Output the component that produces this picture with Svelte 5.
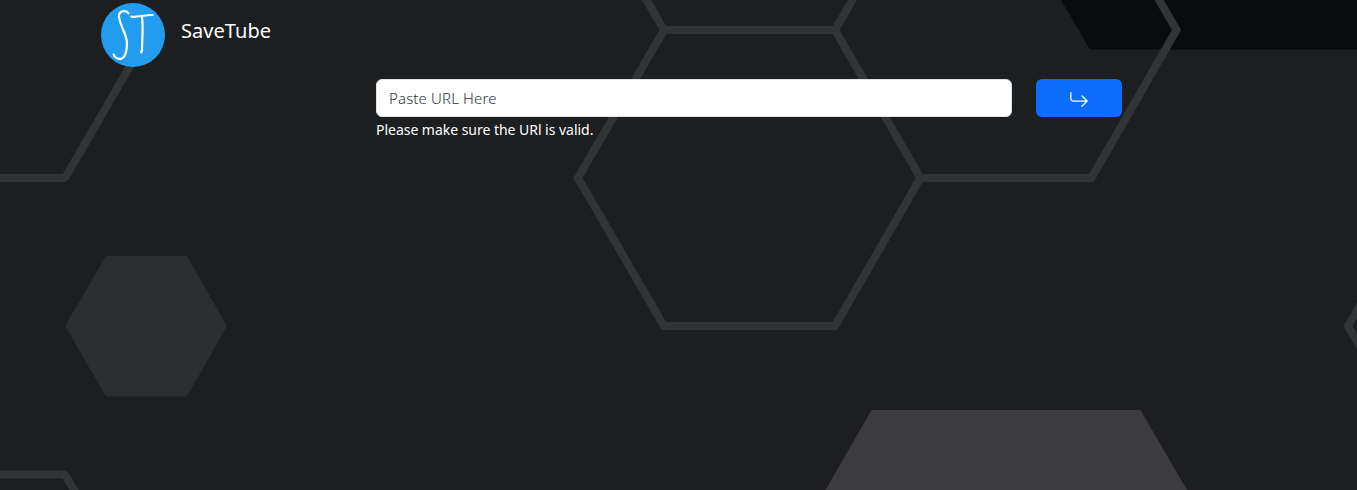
<script>
  let url = $state('');
</script>

<div class="page">
  <svg class="backdrop" width="1357" height="490" viewBox="0 0 1357 490" aria-hidden="true">
    <path fill="#0a0b0d" d="M1061 0H1357V49.500H1090Z" />
    <path fill="#2c2d2f" d="M106 256H187L227 326L187 396.500H106L65 326Z" />
    <path fill="#3c3c3e" d="M871.500 410H1140.500L1187 490H825.500Z" />
    <g fill="none" stroke="#323335" stroke-width="8" stroke-linejoin="bevel">
      <path stroke-linejoin="miter" d="M664 30H835L920.500 178L835 326H664L578 178Z" />
      <path stroke-linejoin="miter" d="M920.500 178H1091.500L1176.500 30L1091 -118" />
      <path d="M578 -118L664 30M921 -118L835 30" />
      <path d="M-10 178H65L151 30" />
      <path d="M-10 474.500H65L151 622" />
      <path stroke-linejoin="miter" d="M1434 178L1348 326L1434 474" />
    </g>
  </svg>

  <header>
    <svg class="logo" width="64" height="64" viewBox="0 0 64 64" role="img" aria-label="ST">
      <circle cx="32" cy="32" r="32" fill="#219cee" />
      <g fill="none" stroke="#fff" stroke-width="2.200" stroke-linecap="round" stroke-linejoin="round">
        <path d="M27.500 10.300C25.500 6.800 18.500 7.800 18 12C17 20 26.300 31 26 40.500C25.800 49 24 55.300 19.500 55.800C15.500 56 13.500 54 12.700 51.500" />
        <path d="M30.300 13.700C36 14.500 44 11.800 51.700 12" />
        <path d="M41 14.500C42.500 24 41 36 41 47.500" />
        <path d="M40.500 48.500L40.300 49" stroke-width="2.800" />
      </g>
    </svg>
    <span class="brand">SaveTube</span>
  </header>

  <form onsubmit={(e) => e.preventDefault()}>
    <div class="field">
      <input type="text" placeholder="Paste URL Here" bind:value={url} />
      <div class="hint">Please make sure the URl is valid.</div>
    </div>
    <button type="submit" aria-label="Submit">
      <svg width="20" height="20" viewBox="0 0 16 16" fill="currentColor">
        <path fill-rule="evenodd" d="M1.500 1.500A.5.5 0 0 0 1 2v4.800a2.500 2.500 0 0 0 2.500 2.500h9.793l-3.347 3.346a.5.5 0 0 0 .708.708l4.200-4.200a.5.5 0 0 0 0-.708l-4-4a.5.5 0 0 0-.708.708L13.293 8.300H3.500A1.500 1.500 0 0 1 2 6.800V2a.5.5 0 0 0-.5-.5z" />
      </svg>
    </button>
  </form>
</div>

<style>
  :global(body) {
    margin: 0;
    background: #1d1e20;
  }
  .page {
    position: relative;
    height: 490px;
    overflow: hidden;
    box-sizing: border-box;
    padding-top: 3px;
    font-family: "Noto Sans", "Open Sans", sans-serif;
    color: #fff;
  }
  .backdrop {
    position: absolute;
    inset: 0;
  }
  header {
    position: relative;
    display: flex;
    height: 64px;
    padding-left: 101px;
    gap: 16px;
  }
  .brand {
    font-size: 20px;
    line-height: 30px;
    padding-top: 13px;
    letter-spacing: 0.05px;
  }
  form {
    position: relative;
    display: flex;
    gap: 24px;
    align-items: flex-start;
    padding: 12px 0 0 376px;
  }
  .field {
    width: 636px;
  }
  input {
    display: block;
    box-sizing: border-box;
    width: 100%;
    height: 38px;
    padding: 6px 12px;
    border: 1px solid #dee2e6;
    border-radius: 6px;
    background: #fff;
    color: #212529;
    font: 300 15px/24px "Noto Sans", "Open Sans", sans-serif;
    letter-spacing: 0.14px;
  }
  input::placeholder {
    color: #303437;
    opacity: 1;
  }
  .hint {
    margin-top: 2px;
    font-size: 14px;
    line-height: 21px;
    letter-spacing: -0.03px;
  }
  button {
    display: flex;
    align-items: center;
    justify-content: center;
    width: 86px;
    height: 38px;
    padding: 3px 0 0;
    border: 0;
    border-radius: 6px;
    background: #0d6efd;
    color: #fff;
  }
</style>
